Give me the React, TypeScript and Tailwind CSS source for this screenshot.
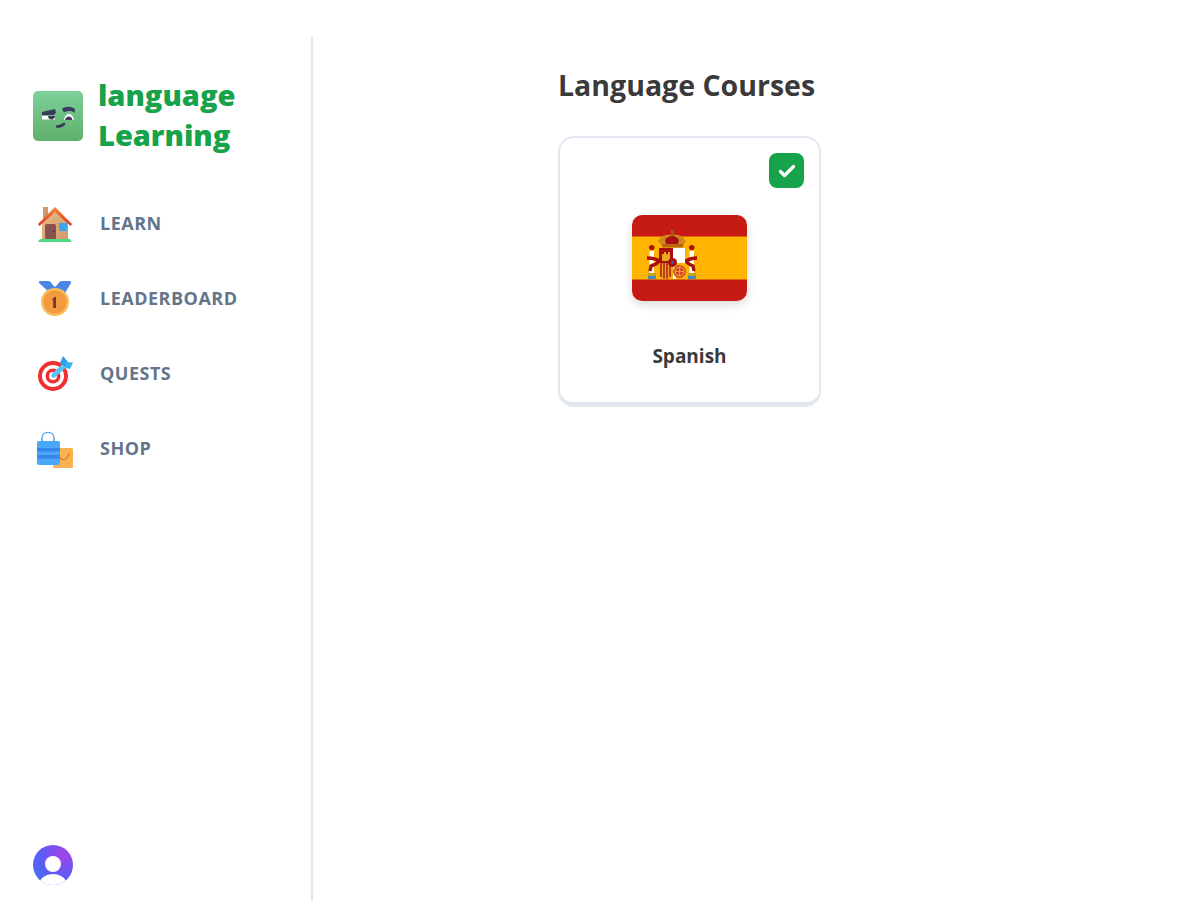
const FONT = "font-['Open_Sans','Lato',sans-serif]";

function Mascot() {
  return (
    <svg width="50" height="50" viewBox="0 0 50 50" className="shrink-0">
      <defs>
        <linearGradient id="mascot" x1="0" y1="0" x2="0" y2="1">
          <stop offset="0" stopColor="#7dd09a" />
          <stop offset="1" stopColor="#5fb069" />
        </linearGradient>
      </defs>
      <rect width="50" height="50" rx="5" fill="url(#mascot)" />
      <path d="M9 25h13v3.500H9z" fill="#fff" />
      <path d="M31 29c.5-4 3-6 5-6s4.500 2 5 6z" fill="#fff" />
      <path d="M15 25h7c0 2-1.500 3.500-3.500 3.500S15 27 15 25z" fill="#3a3a5c" />
      <path d="M32 29c.5-2 2-3.500 4-3.500s3 1.500 3.500 3.500z" fill="#3a3a5c" />
      <path d="M9 21l13-3 1 3.500-2 2.500H9z" fill="#3a3a5c" />
      <path d="M29 18c3-3 9-3 13 0l-.5 4c-3-2.500-7-2.500-10.500-.5z" fill="#3a3a5c" />
      <path d="M24 35.500c2.500 0 5-.5 7-2.500" fill="none" stroke="#3a3a5c" strokeWidth="2.600" strokeLinecap="round" />
    </svg>
  );
}

function HouseIcon() {
  return (
    <svg width="40" height="40" viewBox="0 0 40 40">
      <defs>
        <linearGradient id="wall" x1="0" y1="0" x2="1" y2="1">
          <stop offset="0" stopColor="#e8b888" />
          <stop offset="1" stopColor="#d49a6a" />
        </linearGradient>
        <linearGradient id="roof" x1="0.500" y1="0" x2="0.500" y2="1">
          <stop offset="0" stopColor="#f58a30" />
          <stop offset="1" stopColor="#e0352a" />
        </linearGradient>
      </defs>
      <rect x="8" y="3" width="5" height="13" fill="#d09868" />
      <path d="M7 18 20 8l13 10v17H7z" fill="url(#wall)" />
      <path d="M3 20 20 3l17 17-1.500 2L20 8 4.500 22z" fill="url(#roof)" />
      <rect x="10" y="20" width="11" height="15" rx="1.500" fill="#8a5350" />
      <circle cx="19" cy="27" r="0.800" fill="#3d2320" />
      <rect x="24" y="19" width="8" height="8" fill="#38a8ee" />
      <path d="M3 38l2-3h30l2 3z" fill="#4cd884" />
    </svg>
  );
}

function MedalIcon() {
  return (
    <svg width="40" height="40" viewBox="0 0 40 40">
      <path d="M5 2h8c2 0 3 1 4 3l3 3 3-3c1-2 2-3 4-3h8c1 0 1.500 1 1 2l-6 10H15L4 4c-.5-1 0-2 1-2z" fill="#4a86e8" />
      <circle cx="20" cy="23" r="14" fill="#f9bd5c" />
      <circle cx="20" cy="23" r="11.500" fill="#f39a3c" />
      <path d="M17.500 19.500l3.500-2V29h-2.800v-7.800l-.7.4z" fill="#7a3440" />
    </svg>
  );
}

function TargetIcon() {
  return (
    <svg width="40" height="40" viewBox="0 0 40 40">
      <circle cx="18" cy="22" r="15" fill="#f03030" />
      <circle cx="18" cy="22" r="11" fill="#fff" />
      <circle cx="18" cy="22" r="7.500" fill="#f03030" />
      <circle cx="18" cy="22" r="4" fill="#fff" />
      <circle cx="18" cy="22" r="1.800" fill="#c9c9c9" />
      <path d="M19 21 30 11" stroke="#55c4f5" strokeWidth="5" strokeLinecap="round" />
      <path d="M25 9l3-7 5 6-1 6z" fill="#2f9ee8" />
      <path d="M31 14l-1-6 8 .5-3 6.500z" fill="#3fb0f0" />
    </svg>
  );
}

function BagIcon() {
  return (
    <svg width="40" height="40" viewBox="0 0 40 40">
      <rect x="18" y="19" width="20" height="20" rx="1.500" fill="#f7b351" />
      <path d="M25 29c3 3 8 2 9-5" fill="none" stroke="#e8702a" strokeWidth="1.200" />
      <rect x="2" y="12" width="23" height="24" rx="2" fill="#4aa8f8" />
      <path d="M2 19h23v3.500H2zM2 26h23v3.500H2z" fill="#3585ea" />
      <path d="M7 13V9c0-7.500 12-7.500 12 0v4" fill="none" stroke="#4aa0f0" strokeWidth="1.400" />
    </svg>
  );
}

function SpainFlag() {
  return (
    <svg width="115" height="86" viewBox="0 0 115 86" className="rounded-[10px] shadow-[0_4px_10px_rgba(0,0,0,0.14)]">
      <rect width="115" height="86" fill="#c61a14" />
      <rect y="21.500" width="115" height="43" fill="#ffb400" />
      {/* pillars */}
      <rect x="17.500" y="36" width="4.500" height="23" fill="#fff" />
      <rect x="57.500" y="36" width="4.500" height="23" fill="#fff" />
      <rect x="17" y="30" width="5.500" height="5" rx="2.500" fill="#a81010" />
      <rect x="57" y="30" width="5.500" height="5" rx="2.500" fill="#a81010" />
      <path d="M16 58h8v6h-8zM56 58h8v6h-8z" fill="#c9a020" />
      <path d="M16 61h8v3h-8zM56 61h8v3h-8z" fill="#3f8fc4" />
      {/* ribbons */}
      <path d="M15 43c6 0 10 1 12 3-1 3-4 3-8 5l-1 5" fill="none" stroke="#a81010" strokeWidth="3.400" />
      <path d="M65 43c-6 0-8 1-11 3 1 3 4 3 7 5l1 5" fill="none" stroke="#a81010" strokeWidth="3.400" />
      {/* crown */}
      <path d="M26 26c3-6 10-7 14-6 4-1 11 0 14 6l-3 5H30z" fill="#d08a1c" />
      <path d="M33 25c2-3 4-4 7-4s5 1 7 4l-1 4H34z" fill="#a81010" />
      <path d="M30 29h21v3.500H30z" fill="#b8660f" />
      <rect x="39" y="15" width="2.500" height="6" fill="#a8620f" />
      {/* shield */}
      <rect x="27" y="33" width="14" height="15" fill="#a81010" />
      <rect x="41" y="33" width="12" height="15" fill="#fff" />
      <path d="M30 39h2v-2h2v2h2v-2h2v9h-8z" fill="#e8a820" />
      <path d="M27 48h14v10c0 4-3 6-7 6s-7-2-7-6z" fill="#e8a820" />
      <path d="M29 48v14M32 48v15.500M35 48v15.500M38 48v14" stroke="#b01a10" strokeWidth="1.500" />
      <path d="M41 48h3v16h-3z" fill="#fff" />
      <circle cx="47.500" cy="56.500" r="6.500" fill="#d0481c" />
      <circle cx="47.500" cy="56.500" r="4.500" fill="none" stroke="#f2b04a" strokeWidth="1" />
      <path d="M43 56.500h9M47.500 52v9" stroke="#f2b04a" strokeWidth="0.800" />
      <circle cx="40.500" cy="47.500" r="4.500" fill="#a81010" />
      <circle cx="40.500" cy="47.500" r="1.500" fill="#3060a8" />
    </svg>
  );
}

function Avatar() {
  return (
    <svg width="40" height="40" viewBox="0 0 40 40">
      <defs>
        <radialGradient id="avatar" cx="0.750" cy="0.250" r="0.800">
          <stop offset="0" stopColor="#a640e8" />
          <stop offset="0.700" stopColor="#5a5cf5" />
          <stop offset="1" stopColor="#4f6af5" />
        </radialGradient>
        <clipPath id="avatarClip">
          <circle cx="20" cy="20" r="20" />
        </clipPath>
      </defs>
      <circle cx="20" cy="20" r="20" fill="url(#avatar)" />
      <circle cx="20" cy="19" r="8" fill="#fff" />
      <ellipse cx="20" cy="42" rx="15" ry="13" fill="#fff" clipPath="url(#avatarClip)" />
    </svg>
  );
}

const items = [
  { label: "LEARN", icon: <HouseIcon /> },
  { label: "LEADERBOARD", icon: <MedalIcon /> },
  { label: "QUESTS", icon: <TargetIcon /> },
  { label: "SHOP", icon: <BagIcon /> },
];

export default function App() {
  return (
    <div className={"h-[901px] overflow-hidden bg-white pt-9 flex " + FONT}>
      <aside className="w-[313px] shrink-0 h-full border-r-2 border-[#e2e8f0] pl-[33px] flex flex-col">
        <div className="flex items-center gap-[15px] mt-[40px] h-20">
          <Mascot />
          <div className="text-[29px] leading-10 -mt-[2px] font-extrabold text-[#16a34a]">
            language
            <br />
            Learning
          </div>
        </div>
        <nav className="mt-[48px] flex flex-col gap-[35px] pl-[2px]">
          {items.map((item) => (
            <div key={item.label} className="flex items-center gap-[25px] h-10">
              {item.icon}
              <span className="text-[18px] -mt-[2px] tracking-[0.5px] font-bold text-[#64748b]">{item.label}</span>
            </div>
          ))}
        </nav>
        <div className="mt-auto mb-4">
          <Avatar />
        </div>
      </aside>
      <main className="pl-[245px] pt-[31px]">
        <h1 className="text-[28.500px] leading-[36px] font-bold text-[#3b3a3a] mb-[33px]">Language Courses</h1>
        <div className="relative w-[263px] h-[271px] rounded-2xl border-2 border-b-[5px] border-[#e2e8f0] flex flex-col items-center pt-[77px]">
          <div className="absolute top-[15px] right-[15px] w-[35px] h-[35px] rounded-lg bg-[#16a34a] flex items-center justify-center">
            <svg width="18" height="14" viewBox="0 0 18 14" fill="none">
              <path d="M2.500 7.500 6.500 11.500 15.500 2.500" stroke="#fff" strokeWidth="3.400" strokeLinecap="round" strokeLinejoin="round" />
            </svg>
          </div>
          <SpainFlag />
          <div className="mt-[41px] text-[19px] leading-7 font-bold text-[#3b3a3a]">Spanish</div>
        </div>
      </main>
    </div>
  );
}
